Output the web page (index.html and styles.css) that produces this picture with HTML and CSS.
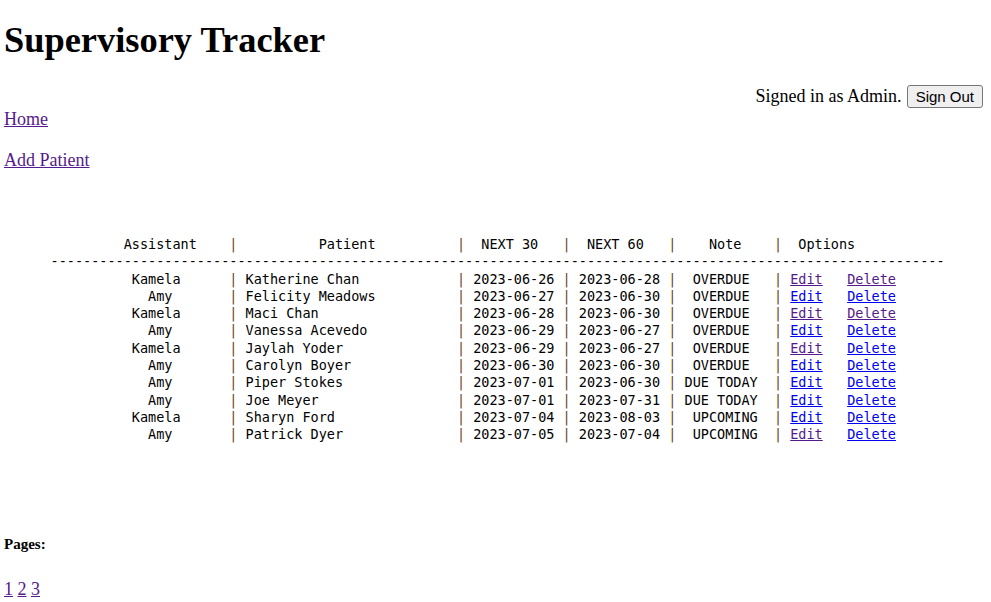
FILE: index.html
```html
<!DOCTYPE html>
<html lang="en">
<head>
<meta charset="utf-8">
<title>Supervisory Tracker</title>
<link rel="stylesheet" href="styles.css">
</head>
<body>
<h1 class="title">Supervisory Tracker</h1>
<div class="session"><span class="session-text">Signed in as Admin.</span><button class="btn" type="button">Sign Out</button></div>
<p class="nav-item"><a class="lnk visited" href="#">Home</a></p>
<p class="nav-item second"><a class="lnk visited" href="#">Add Patient</a></p>

<div class="listing">
<div class="line"><span class="f-asst">         Assistant</span><span class="sep">|</span><span class="f-hpat">          Patient</span><span class="sep">|</span>  NEXT 30   <span class="sep">|</span>  NEXT 60   <span class="sep">|</span>    Note    <span class="sep">|</span>  Options</div>
<div class="line">--------------------------------------------------------------------------------------------------------------</div>
<div class="line"><span class="f-asst">          Kamela</span><span class="sep">|</span> <span class="f-pat">Katherine Chan</span><span class="sep">|</span> 2023-06-26 <span class="sep">|</span> 2023-06-28 <span class="sep">|</span><span class="f-note">  OVERDUE</span><span class="sep">|</span> <a class="lnk visited" href="#">Edit</a>   <a class="lnk visited" href="#">Delete</a></div>
<div class="line"><span class="f-asst">            Amy</span><span class="sep">|</span> <span class="f-pat">Felicity Meadows</span><span class="sep">|</span> 2023-06-27 <span class="sep">|</span> 2023-06-30 <span class="sep">|</span><span class="f-note">  OVERDUE</span><span class="sep">|</span> <a class="lnk" href="#">Edit</a>   <a class="lnk" href="#">Delete</a></div>
<div class="line"><span class="f-asst">          Kamela</span><span class="sep">|</span> <span class="f-pat">Maci Chan</span><span class="sep">|</span> 2023-06-28 <span class="sep">|</span> 2023-06-30 <span class="sep">|</span><span class="f-note">  OVERDUE</span><span class="sep">|</span> <a class="lnk visited" href="#">Edit</a>   <a class="lnk visited" href="#">Delete</a></div>
<div class="line"><span class="f-asst">            Amy</span><span class="sep">|</span> <span class="f-pat">Vanessa Acevedo</span><span class="sep">|</span> 2023-06-29 <span class="sep">|</span> 2023-06-27 <span class="sep">|</span><span class="f-note">  OVERDUE</span><span class="sep">|</span> <a class="lnk" href="#">Edit</a>   <a class="lnk" href="#">Delete</a></div>
<div class="line"><span class="f-asst">          Kamela</span><span class="sep">|</span> <span class="f-pat">Jaylah Yoder</span><span class="sep">|</span> 2023-06-29 <span class="sep">|</span> 2023-06-27 <span class="sep">|</span><span class="f-note">  OVERDUE</span><span class="sep">|</span> <a class="lnk visited" href="#">Edit</a>   <a class="lnk" href="#">Delete</a></div>
<div class="line"><span class="f-asst">            Amy</span><span class="sep">|</span> <span class="f-pat">Carolyn Boyer</span><span class="sep">|</span> 2023-06-30 <span class="sep">|</span> 2023-06-30 <span class="sep">|</span><span class="f-note">  OVERDUE</span><span class="sep">|</span> <a class="lnk" href="#">Edit</a>   <a class="lnk" href="#">Delete</a></div>
<div class="line"><span class="f-asst">            Amy</span><span class="sep">|</span> <span class="f-pat">Piper Stokes</span><span class="sep">|</span> 2023-07-01 <span class="sep">|</span> 2023-06-30 <span class="sep">|</span><span class="f-note"> DUE TODAY</span><span class="sep">|</span> <a class="lnk" href="#">Edit</a>   <a class="lnk" href="#">Delete</a></div>
<div class="line"><span class="f-asst">            Amy</span><span class="sep">|</span> <span class="f-pat">Joe Meyer</span><span class="sep">|</span> 2023-07-01 <span class="sep">|</span> 2023-07-31 <span class="sep">|</span><span class="f-note"> DUE TODAY</span><span class="sep">|</span> <a class="lnk" href="#">Edit</a>   <a class="lnk" href="#">Delete</a></div>
<div class="line"><span class="f-asst">          Kamela</span><span class="sep">|</span> <span class="f-pat">Sharyn Ford</span><span class="sep">|</span> 2023-07-04 <span class="sep">|</span> 2023-08-03 <span class="sep">|</span><span class="f-note">  UPCOMING</span><span class="sep">|</span> <a class="lnk" href="#">Edit</a>   <a class="lnk" href="#">Delete</a></div>
<div class="line"><span class="f-asst">            Amy</span><span class="sep">|</span> <span class="f-pat">Patrick Dyer</span><span class="sep">|</span> 2023-07-05 <span class="sep">|</span> 2023-07-04 <span class="sep">|</span><span class="f-note">  UPCOMING</span><span class="sep">|</span> <a class="lnk visited" href="#">Edit</a>   <a class="lnk" href="#">Delete</a></div>
</div>

<h5 class="pages-title">Pages:</h5>
<p class="pages"><a class="lnk visited" href="#">1</a> <a class="lnk visited" href="#">2</a> <a class="lnk visited" href="#">3</a></p>
</body>
</html>
```

FILE: styles.css
```css
html, body {
  background: #ffffff;
}
body {
  margin: 0;
  padding: 0 8px 0 4px;
  font-family: "Liberation Serif", "Times New Roman", serif;
  font-size: 18px;
  color: #000000;
}
.title {
  margin: 19px 0 0;
  font-size: 36.4px;
  font-weight: bold;
  line-height: 42px;
}
.session {
  margin-top: 24px;
  display: flex;
  justify-content: flex-end;
  align-items: baseline;
  gap: 5px;
}
.session-text {
  line-height: 21px;
}
.btn {
  box-sizing: border-box;
  height: 23px;
  padding: 0 8px;
  border: 1px solid #767676;
  border-radius: 3px;
  background: #efefef;
  color: #000000;
  font-family: "Liberation Sans", Arial, sans-serif;
  font-size: 15px;
  line-height: 21px;
}
.nav-item {
  margin: 0;
  line-height: 22px;
}
.nav-item.second {
  margin-top: 19px;
}
.lnk {
  color: #0000ee;
  text-decoration: underline;
}
.lnk.visited {
  color: #551a8b;
}
.listing {
  margin: 65px 0 0 46.5px;
  width: max-content;
  font-family: "DejaVu Sans Mono", "Liberation Mono", monospace;
  font-size: 13.5px;
  line-height: 17.3px;
}
.line {
  height: 17.3px;
  white-space: pre;
}
.sep {
  color: #6e4320;
}
.f-asst {
  display: inline-block;
  width: 22ch;
}
.f-hpat {
  display: inline-block;
  width: 27ch;
}
.f-pat {
  display: inline-block;
  width: 26ch;
}
.f-note {
  display: inline-block;
  width: 12ch;
}
.pages-title {
  margin: 91px 0 0;
  font-size: 15px;
  font-weight: bold;
  line-height: 18px;
}
.pages {
  margin: 25px 0 0;
  line-height: 22px;
}
```
